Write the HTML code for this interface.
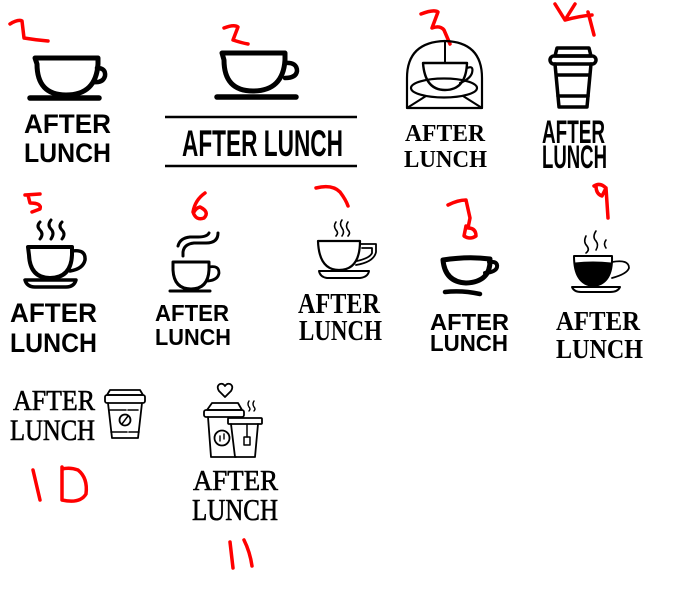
<!DOCTYPE html>
<html><head><meta charset="utf-8"><style>
html,body{margin:0;padding:0;background:#fff;}
svg{display:block}
.r{fill:none;stroke:#f00;stroke-width:3.5;stroke-linecap:round;stroke-linejoin:round}
.b{font-family:"Liberation Sans",sans-serif;font-weight:bold}
.n{font-family:"Liberation Sans Narrow","Liberation Sans",sans-serif;font-weight:bold}
.s{font-family:"Liberation Serif",serif;font-weight:bold}
.c{font-family:"Liberation Serif",serif;stroke:#000;stroke-width:0.6}
</style></head><body>
<svg width="674" height="590" viewBox="0 0 674 590" xmlns="http://www.w3.org/2000/svg">
<!-- red numbers -->
<path class="r" d="M10 24 Q18 19 22 21 L24 38 Q36 40 48 41"/>
<path class="r" d="M224 28 Q234 24 238 27 L233 40 Q242 43 248 44"/>
<path class="r" d="M421 14 Q434 9 438 12 L432 28 Q440 25 444 30 L450 44"/>
<path class="r" d="M555 4 L565 20 L575 4 M565 20 Q580 16 592 15 M588 12 L594 35"/>
<path class="r" d="M25 195 L40 194 M28 195 L30 203 Q42 203 40 209 L32 212"/>
<path class="r" d="M205 193 Q195 200 193 212 Q196 221 204 218 Q210 212 200 207 Q196 208 194 212"/>
<path class="r" d="M316 188 Q332 184 340 192 Q346 200 348 206"/>
<path class="r" d="M448 205 Q458 200 466 200 L470 218 L468 228 Q476 228 476 236 Q470 240 464 236 L466 226"/>
<path class="r" d="M594 186 Q600 182 606 188 L602 196 Q596 194 596 186 M606 188 L608 218"/>
<path class="r" d="M33 470 L40 500 M62 467 L62 500 Q80 504 86 494 Q88 478 78 470 Q70 467 62 469"/>
<path class="r" d="M230 542 L233 568 M244 540 Q250 552 252 566"/>

<g fill="none" stroke="#000" stroke-linecap="round" stroke-linejoin="round">
<!-- 1 -->
<path d="M35 58 H98 V64 Q96 95 66 95 Q37 95 37 64 Z" stroke-width="5"/>
<path d="M97 68 Q106 68 105 76 Q103 83 94 82" stroke-width="4.5"/>
<path d="M30 98 H99" stroke-width="5.5"/>
<!-- 2 -->
<path d="M222 53 H285 V60 Q283 91 253 91 Q224 91 224 60 Z" stroke-width="5"/>
<path d="M285 63 Q297 62 297 71 Q296 78 285 78" stroke-width="4.5"/>
<path d="M217 97 H296" stroke-width="5.5"/>
<path d="M165 117 H357 M165 166 H357" stroke-width="2.5" stroke-linecap="butt"/>
<!-- 3 -->
<path d="M407 108 V78 Q407 42 445 41 Q482 42 482 78 V108 Z" stroke-width="2.2"/>
<path d="M445 41 V62" stroke-width="2"/>
<path d="M423 63 H467 Q466 90 445 90 Q425 90 423 63 Z" stroke-width="2.4"/>
<path d="M467 68 Q474 65 472 73 Q470 79 460 83" stroke-width="2.2"/>
<ellipse cx="444" cy="88" rx="33" ry="9.5" stroke-width="2.2"/>
<path d="M407 108 L426 96 M482 108 L463 96" stroke-width="2"/>
<!-- 4 -->
<path d="M557 48 H589 L591 56 H555 Z" stroke-width="3.5"/>
<rect x="550" y="56" width="46" height="8" rx="4" stroke-width="3.5"/>
<path d="M555 64 L559 107 H587 L591 64" stroke-width="3.5"/>
<path d="M557 75 H589 M558 96 H588" stroke-width="3.5"/>
<!-- 5 -->
<path d="M40 222 Q36 226 40 230 Q44 234 40 239 M51 220 Q47 225 51 229 Q55 233 51 239 M62 222 Q58 226 62 230 Q66 234 62 239" stroke-width="3"/>
<path d="M28 247 H72 V255 Q71 278 50 278 Q30 278 29 255 Z" stroke-width="4"/>
<path d="M72 251 Q86 249 85 260 Q83 269 70 271" stroke-width="3.5"/>
<path d="M25 280 H76 Q74 287 66 287 H35 Q27 287 25 280 Z" stroke-width="3.5"/>
<!-- 6 -->
<path d="M183 256 V252 Q184 244 194 243 H206 Q218 243 218 233" stroke-width="3"/>
<path d="M178 246 Q180 238 190 237 H198 Q207 237 209 233" stroke-width="3"/>
<path d="M173 262 H209 V270 Q208 289 191 289 Q174 289 173 270 Z" stroke-width="3"/>
<path d="M209 267 Q219 265 219 273 Q218 280 208 281" stroke-width="2.8"/>
<path d="M170 291 H210" stroke-width="3"/>
<!-- 7 -->
<path d="M336 222 Q333 226 336 230 Q339 233 336 236 M342 220 Q339 224 342 228 Q345 232 342 236 M348 222 Q345 226 348 230 Q351 233 348 236" stroke-width="1.6"/>
<path d="M318 241 H360 Q360 270 339 270 Q319 270 318 241 Z" stroke-width="2.2"/>
<path d="M360 244 H376 V252 Q374 262 356 265 M362 248 H372 V253 Q370 258 357 261" stroke-width="1.8"/>
<path d="M319 271 H369 Q368 277 360 278 H327 Q320 277 319 271 Z" stroke-width="2"/>
<!-- 8 -->
<path d="M443 260 Q468 256 490 259 Q491 282 466 283 Q445 282 443 260 Z" stroke-width="5"/>
<path d="M489 262 Q498 261 497 267 Q496 272 485 273" stroke-width="4"/>
<path d="M445 292 Q462 290 480 294" stroke-width="4.5"/>
<!-- 9 -->
<path d="M586 236 Q583 242 587 246 Q590 250 586 253 M596 231 Q592 237 596 241 Q599 245 596 250 M606 240 Q603 244 606 248" stroke-width="1.6"/>
<path d="M574 256 H612 Q613 284 593 286 Q574 284 574 256 Z" stroke-width="2"/>
<path d="M575 263 Q593 261 611 263 Q611 284 593 285 Q575 284 575 263 Z" fill="#000" stroke-width="1"/>
<path d="M612 262 Q629 259 629 268 Q627 274 612 278" stroke-width="1.8"/>
<path d="M572 287 H620 Q618 292 610 292 H581 Q574 292 572 287 Z" stroke-width="2"/>
<!-- 10 -->
<path d="M110 390 H140 L143 395 H107 Z" stroke-width="1.8"/>
<rect x="105" y="395" width="40" height="8" rx="2" stroke-width="1.8"/>
<path d="M108 403 L112 438 H138 L142 403" stroke-width="1.8"/>
<path d="M110 410 H140 M111 432 H139" stroke-width="1.6" stroke-dasharray="16 2 10 2 40"/>
<circle cx="125" cy="420" r="5.5" stroke-width="1.8"/>
<path d="M122 424 L128 416" stroke-width="1.5"/>
<!-- 11 -->
<path d="M225 397 L219 391 Q216 386 220 384 Q223 383 225 386 Q227 383 230 384 Q234 386 231 391 Z" stroke-width="1.8"/>
<path d="M249 401 Q247 404 249 407 Q251 409 249 411 M254 401 Q252 404 254 407 Q256 409 254 411" stroke-width="1.4"/>
<path d="M212 403 H238 L242 410 H207 Z" stroke-width="1.8"/>
<rect x="204" y="410" width="40" height="7" rx="2" stroke-width="1.8"/>
<path d="M208 417 L211 457 H236" stroke-width="1.8"/>
<rect x="228" y="418" width="34" height="6" rx="1" stroke-width="1.8"/>
<path d="M231 424 L235 457 H255 L258 424" stroke-width="1.8"/>
<circle cx="222" cy="438" r="7.5" stroke-width="1.8"/>
<path d="M220 436 V441 M224 434 V439" stroke-width="1.4"/>
<path d="M247 424 V437" stroke-width="1.5"/>
<rect x="244" y="437" width="6" height="8" stroke-width="1.5"/>
</g>

<g fill="#000">
<text class="b" x="24" y="133" font-size="27" textLength="87" lengthAdjust="spacingAndGlyphs">AFTER</text>
<text class="b" x="24" y="162" font-size="27" textLength="87" lengthAdjust="spacingAndGlyphs">LUNCH</text>
<text class="n" x="182" y="156" font-size="37" textLength="161" lengthAdjust="spacingAndGlyphs">AFTER LUNCH</text>
<text class="s" x="405" y="141" font-size="24" textLength="80" lengthAdjust="spacingAndGlyphs">AFTER</text>
<text class="s" x="404" y="167" font-size="24" textLength="83" lengthAdjust="spacingAndGlyphs">LUNCH</text>
<text class="n" x="542" y="143" font-size="32" textLength="63" lengthAdjust="spacingAndGlyphs">AFTER</text>
<text class="n" x="542" y="168" font-size="32" textLength="65" lengthAdjust="spacingAndGlyphs">LUNCH</text>
<text class="b" x="10" y="322" font-size="27" textLength="87" lengthAdjust="spacingAndGlyphs">AFTER</text>
<text class="b" x="10" y="352" font-size="27" textLength="87" lengthAdjust="spacingAndGlyphs">LUNCH</text>
<text class="b" x="155" y="321" font-size="23" textLength="74" lengthAdjust="spacingAndGlyphs">AFTER</text>
<text class="b" x="155" y="345" font-size="23" textLength="76" lengthAdjust="spacingAndGlyphs">LUNCH</text>
<text class="s" x="298" y="313" font-size="29" textLength="82" lengthAdjust="spacingAndGlyphs">AFTER</text>
<text class="s" x="299" y="340" font-size="29" textLength="83" lengthAdjust="spacingAndGlyphs">LUNCH</text>
<text class="b" x="430" y="330" font-size="23" textLength="79" lengthAdjust="spacingAndGlyphs">AFTER</text>
<text class="b" x="430" y="351" font-size="23" textLength="78" lengthAdjust="spacingAndGlyphs">LUNCH</text>
<text class="s" x="556" y="330" font-size="27" textLength="84" lengthAdjust="spacingAndGlyphs">AFTER</text>
<text class="s" x="556" y="358" font-size="27" textLength="87" lengthAdjust="spacingAndGlyphs">LUNCH</text>
<text class="c" x="13" y="410" font-size="28" textLength="82" lengthAdjust="spacingAndGlyphs">AFTER</text>
<text class="c" x="10" y="440" font-size="30" textLength="85" lengthAdjust="spacingAndGlyphs">LUNCH</text>
<text class="c" x="193" y="490" font-size="28" textLength="85" lengthAdjust="spacingAndGlyphs">AFTER</text>
<text class="c" x="192" y="520" font-size="31" textLength="86" lengthAdjust="spacingAndGlyphs">LUNCH</text>
</g>
</svg>
</body></html>
